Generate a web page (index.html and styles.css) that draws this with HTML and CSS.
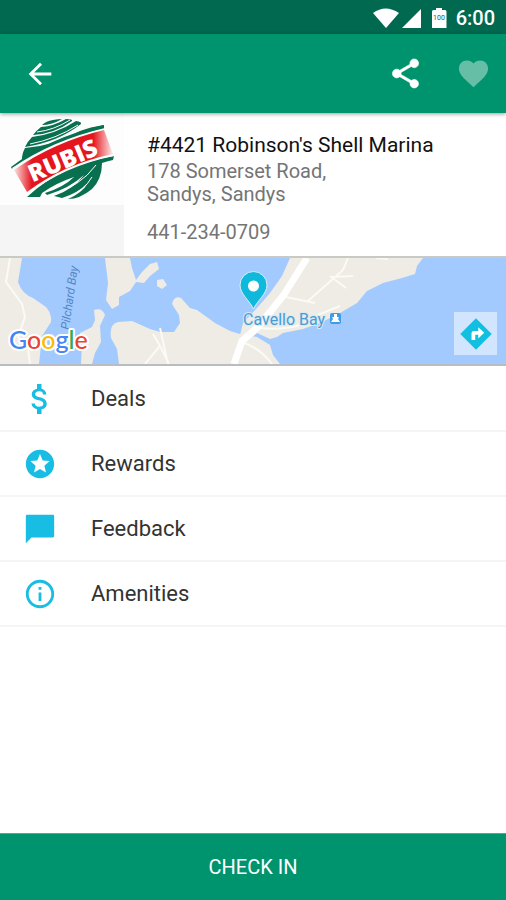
FILE: index.html
```html
<!DOCTYPE html>
<html lang="en">
<head>
<meta charset="utf-8">
<meta name="viewport" content="width=device-width, initial-scale=1">
<title>Robinson's Shell Marina</title>
<link rel="stylesheet" href="styles.css">
</head>
<body>
<div class="screen">
  <div class="status">
    <svg width="76" height="24" viewBox="0 0 76 24" aria-hidden="true">
      <g fill="#fff">
        <path d="M1 7Q13.500 -2 27 7L14 22Z"/>
        <path d="M49 3V22H30Z"/>
        <path d="M64 2H70V4H73Q74.500 4 74.500 5.500V22H60V5.500Q60 4 61.500 4H64Z"/>
      </g>
      <text class="battery" x="67" y="14" text-anchor="middle">100</text>
    </svg>
    <span class="clock">6:00</span>
  </div>

  <header class="appbar">
    <button class="icon-button" aria-label="Back">
      <svg width="34" height="34" viewBox="0 0 24 24"><path fill="#fff" d="M20 11H7.830l5.590-5.590L12 4l-8 8 8 8 1.410-1.410L7.830 13H20v-2z"/></svg>
    </button>
    <span class="actions">
      <button class="icon-button" aria-label="Share">
        <svg width="35" height="35" viewBox="0 0 24 24"><path fill="#fff" d="M18 16.080c-.76 0-1.440.3-1.960.77L8.910 12.700c.05-.23.09-.46.09-.7s-.04-.47-.09-.7l7.050-4.110c.54.5 1.250.81 2.040.81 1.660 0 3-1.340 3-3s-1.340-3-3-3-3 1.340-3 3c0 .24.04.47.09.7L8.040 9.810C7.500 9.310 6.790 9 6 9c-1.660 0-3 1.340-3 3s1.340 3 3 3c.79 0 1.500-.31 2.040-.81l7.120 4.160c-.05.21-.08.43-.08.65 0 1.610 1.310 2.920 2.920 2.920s2.920-1.310 2.920-2.920-1.310-2.920-2.920-2.920z" stroke="#fff" stroke-width=".4"/></svg>
      </button>
      <button class="icon-button" aria-label="Favorite">
        <svg width="35" height="35" viewBox="0 0 24 24"><path fill="#66bea6" d="M12 21.350l-1.450-1.320C5.400 15.360 2 12.280 2 8.500 2 5.420 4.420 3 7.500 3c1.740 0 3.410.81 4.500 2.090C13.090 3.810 14.760 3 16.500 3 19.580 3 22 5.420 22 8.500c0 3.780-3.400 6.860-8.550 11.540L12 21.350z"/></svg>
      </button>
    </span>
  </header>

  <section class="station">
    <div class="brand">
      <svg width="124" height="92" viewBox="0 0 124 92" role="img" aria-label="Rubis">
        <defs>
          <linearGradient id="band" x1="0" x2="1">
            <stop offset="0" stop-color="#fbe4e2"/>
            <stop offset=".18" stop-color="#e4151d"/>
            <stop offset=".8" stop-color="#e4151d"/>
            <stop offset="1" stop-color="#fdf0ef"/>
          </linearGradient>
        </defs>
        <rect width="124" height="92" fill="#fdfdfd"/>
        <g fill="#08704f">
          <path d="M22 52Q21 42 25 35Q53 33 80 18Q90 14 104 12V16Q54 28 22 52Z"/>
          <path d="M11 54Q50 24 104 12L103 17Q50 29 12 56Z"/>
          <path d="M25 34Q28 28 32 24Q56 21 76 8Q82 9 81 11Q58 29 25 34Z"/>
          <path d="M33 22Q37 17 41 14Q54 13 66 6Q73 6 72 8Q54 21 33 22Z"/>
          <path d="M42 12Q46 8 53 7Q58 6 62 6Q52 12 42 12Z"/>
          <path d="M27 84Q62 51 114 43L113 47Q108 48 102 50Q102 66 92 76Q80 86 68 86Q82 80 88 70Q78 80 62 85L54 83Q74 76 84 62Q70 75 47 82L45 80Q64 74 74 64Q56 70 42 80L40 84Z"/>
        </g>
        <g fill="none" stroke="#fdfdfd" stroke-width="1">
          <path d="M30 31Q56 26 78 12M37 19Q54 17 70 7"/>
          <path d="M50 82Q80 74 96 52M66 85Q84 78 92 64"/>
        </g>
        <path fill="#fdfdfd" d="M12 55Q53 27 105 15L114 43Q64 53 27 82Z"/>
        <path fill="url(#band)" d="M14 57Q54 29 104 17L113 41Q64 51 27 79Z"/>
        <text class="brand-name" x="63" y="56" text-anchor="middle" transform="rotate(-23 63 48)">RUBIS</text>
      </svg>
    </div>
    <div class="details">
      <h1>#4421 Robinson's Shell Marina</h1>
      <address>178 Somerset Road,<br>Sandys, Sandys</address>
      <a class="phone" href="tel:4412340709">441-234-0709</a>
    </div>
  </section>

  <section class="map">
    <svg class="map-art" viewBox="0 0 506 106" preserveAspectRatio="xMidYMid slice" role="img" aria-label="Map of Cavello Bay">
      <rect width="506" height="106" fill="#a2caff"/>
      <g fill="#efece5">
        <path d="M0 0H22L18 24Q22 36 33 40L46 49Q52 56 51 64L42 78L39 106H0Z"/>
        <path d="M105 0L108 25L106 42L112 51L119 47V39L130 33L136 24L144 25L150 18L159 11L157 4L150 6L142 14L136 22L132 10L130 0Z"/>
        <path d="M157 22L163 21L167 27L162 31L157 28Z"/>
        <path d="M94 52Q102 49 105 57L100 68L101 84L95 95L92 106H81L82 85L80 75L92 69L95 62Z"/>
        <path d="M119 106L117 91L111 80Q109 66 118 64L132 63L150 71L160 74L174 74L180 65L179 57L172 46Q174 37 181 40L190 50L197 52L215 65L230 73L243 77L257 79L270 87L273 97L280 106Z"/>
        <path d="M290 0L282 18L270 35L257 50L243 65L240 77L250 81L257 75L270 81L277 79L283 75L303 71L320 65L340 55L357 45L367 33L383 25L402 20L415 16L417 8L423 0Z"/>
      </g>
      <g fill="none" stroke="#fbfaf7" stroke-width="2">
        <path d="M10 0L6 24L22 46L25 59L18 79L28 90L30 106M145 106L160 88L153 76M160 88L169 106M160 70L168 106M242 84Q260 90 272 106M258 70Q300 74 320 56L340 48M286 39L315 45M308 43L343 12L348 0M330 18L346 30M332 19L353 18M376 0L388 1"/>
      </g>
      <path d="M307 0L283 38L257 70L242 83L234 106" fill="none" stroke="#fff" stroke-width="7"/>
      <text class="bay" transform="translate(69 72) rotate(-82)">Pilchard Bay</text>
      <text class="place" x="243" y="67">Cavello Bay</text>
      <rect x="330" y="55" width="11" height="11" rx="2" fill="#3f9be6"/>
      <path d="M332 59H334L334 56H337V59H339L338 61L340 64H331L333 61Z" fill="#fff"/>
      <text class="google" x="9" y="91"><tspan fill="#4285f4">G</tspan><tspan fill="#ea4335">o</tspan><tspan fill="#fbbc05">o</tspan><tspan fill="#4285f4">g</tspan><tspan fill="#34a853">l</tspan><tspan fill="#ea4335">e</tspan></text>
      <path d="M253.500 51C250 43 240 36 240 27A13.500 13.500 0 0 1 267 27C267 36 257 43 253.500 51Z" fill="#10b9dc" stroke="#d8f2fb" stroke-width="1"/>
      <circle cx="253.500" cy="28" r="5.500" fill="#fff"/>
    </svg>
    <button class="directions" aria-label="Directions">
      <svg width="36" height="36" viewBox="0 0 24 24"><path fill="#12bfe0" d="M12 1.500L22.500 12L12 22.500L1.500 12Z"/><path fill="#fff" d="M9 16V11.500Q9 10 10.500 10H13.500V7.500L17.500 11.200L13.500 15V12.500H11.500V16Z"/></svg>
    </button>
  </section>

  <nav class="menu">
    <a href="#deals"><svg width="36" height="36" viewBox="0 0 24 24"><path d="M11.800 10.900c-2.270-.59-3-1.200-3-2.150 0-1.090 1.010-1.850 2.700-1.850 1.780 0 2.440.85 2.500 2.100h2.210c-.07-1.720-1.120-3.300-3.210-3.810V2h-3v3.160c-1.940.42-3.500 1.680-3.500 3.610 0 2.310 1.910 3.460 4.700 4.130 2.500.6 3 1.480 3 2.410 0 .69-.49 1.790-2.700 1.790-2.060 0-2.870-.92-2.980-2.100h-2.200c.12 2.190 1.760 3.420 3.680 3.830V22h3v-3.150c1.950-.37 3.500-1.500 3.500-3.550 0-2.840-2.430-3.810-4.700-4.400z"/></svg>Deals</a>
    <a href="#rewards"><svg width="34" height="34" viewBox="0 0 24 24"><path d="M11.990 2C6.470 2 2 6.480 2 12s4.470 10 9.990 10C17.520 22 22 17.520 22 12S17.520 2 11.990 2zm4.240 16L12 15.450 7.770 18l1.120-4.810-3.730-3.230 4.920-.42L12 5l1.920 4.530 4.920.42-3.730 3.230L16.230 18z"/></svg>Rewards</a>
    <a href="#feedback"><svg width="34" height="34" viewBox="0 0 24 24"><path d="M21 2H3c-.6 0-1 .4-1 1L2 22l4-4h15c.6 0 1-.4 1-1V3c0-.6-.4-1-1-1z"/></svg>Feedback</a>
    <a href="#amenities"><svg width="34" height="34" viewBox="0 0 24 24"><path d="M11 17h2v-6h-2v6zm1-15C6.480 2 2 6.480 2 12s4.480 10 10 10 10-4.480 10-10S17.520 2 12 2zm0 18c-4.410 0-8-3.590-8-8s3.590-8 8-8 8 3.590 8 8-3.590 8-8 8zM11 9h2V7h-2v2z"/></svg>Amenities</a>
  </nav>

  <button class="checkin">CHECK IN</button>
</div>
</body>
</html>
```

FILE: styles.css
```css
* {
  box-sizing: border-box;
}

body {
  margin: 0;
  background: #fff;
  font-family: Roboto, "Liberation Sans", sans-serif;
  color: #212121;
}

button {
  border: 0;
  padding: 0;
  font: inherit;
  cursor: pointer;
}

svg {
  display: block;
  flex: none;
}

.screen {
  display: flex;
  flex-direction: column;
  min-height: 100vh;
}

.status {
  display: flex;
  align-items: center;
  justify-content: flex-end;
  gap: 8px;
  height: 34px;
  padding: 2px 11px 0 0;
  background: #00694f;
}

.clock {
  color: #fff;
  font-size: 20px;
  font-weight: 500;
}

.battery {
  fill: #00694f;
  font-size: 7px;
  font-weight: 400;
}

.appbar {
  position: relative;
  display: flex;
  align-items: center;
  justify-content: space-between;
  height: 79px;
  padding: 0 8px;
  background: #00946e;
  box-shadow: 0 1px 4px rgba(0, 0, 0, 0.4);
}

.actions {
  display: flex;
  gap: 4px;
  margin-right: -7px;
}

.icon-button {
  display: grid;
  place-items: center;
  width: 64px;
  height: 64px;
  background: none;
}

.station {
  display: flex;
  min-height: 143px;
}

.brand {
  width: 124px;
  background: #f5f5f5;
}

.brand-name {
  fill: #fff;
  font-family: "Open Sans", sans-serif;
  font-size: 24px;
  font-weight: 800;
}

.details {
  flex: 1;
  padding: 20px 16px 0 23px;
  font-size: 20px;
  line-height: 24px;
  color: #757575;
}

h1 {
  margin: 0 0 3px;
  font-size: 21px;
  font-weight: 400;
  color: #111;
}

address {
  margin-bottom: 14px;
  font-style: normal;
  line-height: 23px;
}

.phone {
  color: inherit;
  text-decoration: none;
}

.map {
  position: relative;
  height: 110px;
  border-top: 2px solid #c9c9c6;
  border-bottom: 2px solid #b9bdc2;
}

.map-art {
  width: 100%;
  height: 100%;
}

.bay {
  fill: #5686c5;
  font-size: 12px;
  font-style: italic;
}

.place {
  fill: #4b9bce;
  stroke: #d9eaf8;
  stroke-width: 2px;
  paint-order: stroke;
  font-size: 16px;
}

.google {
  stroke: #fff;
  stroke-width: 4px;
  stroke-linejoin: round;
  paint-order: stroke;
  font-family: Lato, sans-serif;
  font-size: 25px;
  font-weight: 500;
}

.directions {
  position: absolute;
  right: 9px;
  bottom: 9px;
  display: grid;
  place-items: center;
  width: 43px;
  height: 43px;
  background: #d2e5ff;
}

.menu {
  padding-top: 1px;
}

.menu a {
  display: flex;
  align-items: center;
  height: 65px;
  padding-left: 22px;
  border-bottom: 2px solid #f5f5f5;
  font-size: 22px;
  color: #333;
  text-decoration: none;
}

.menu svg {
  width: 36px;
  margin-right: 33px;
  fill: #18bde3;
}

.checkin {
  height: 67px;
  margin-top: auto;
  background: #00946e;
  border-top: 1px solid #4aac91;
  color: #fff;
  font-size: 20px;
}
```
